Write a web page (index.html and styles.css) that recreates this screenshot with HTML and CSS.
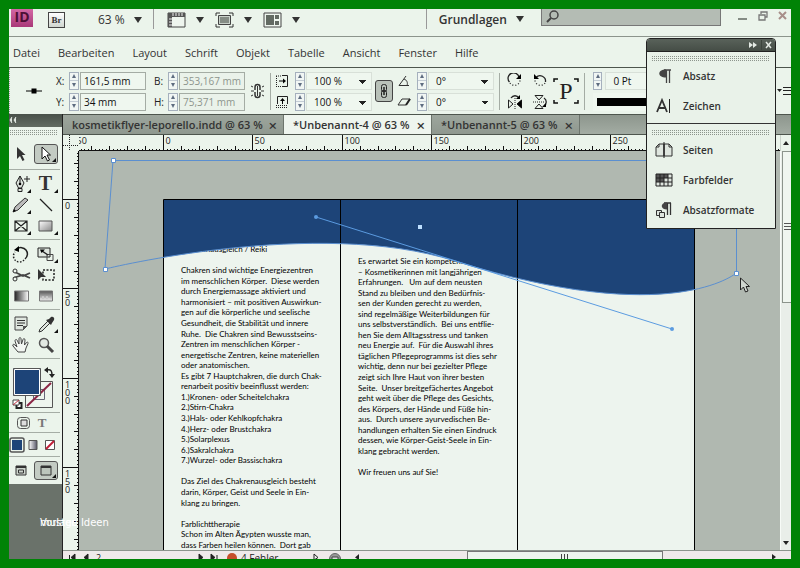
FILE: index.html
```html
<!DOCTYPE html>
<html lang="de">
<head>
<meta charset="utf-8">
<title>Unbenannt-4</title>
<link rel="stylesheet" href="styles.css">
</head>
<body>
<div class="app">
  <header class="topbar">
    <span class="logo">ID</span>
    <button class="bridge">Br</button>
    <button class="drop zoom">63 %<i class="caret"></i></button>
    <div class="views">
      <button class="drop" aria-label="Anzeigeoptionen"><svg width="20" height="16" viewBox="0 0 20 16"><path d="M1 1h17v14H1z" fill="#eef5ee" stroke="#444"/><path d="M1 1h17v4H5v10H1z" fill="#555"/><path d="M6 1v3M9 1v3M12 1v3M15 1v3M2 7h3M2 10h3M2 13h3" stroke="#eee"/></svg><i class="caret"></i></button>
      <button class="drop" aria-label="Bildschirmmodus"><svg width="20" height="16" viewBox="0 0 20 16"><path d="M1 4V1h4M14 1h4v3M18 12v3h-4M5 15H1v-3" fill="none" stroke="#333"/><path d="M3.500 3.500h12v9h-12z" fill="#c9d1c9" stroke="#444"/><path d="M5 5h9v6H5z" fill="#858d85"/></svg><i class="caret"></i></button>
      <button class="drop" aria-label="Dokumente anordnen"><svg width="20" height="16" viewBox="0 0 20 16"><path d="M1 1h17v14H1z" fill="#eef5ee" stroke="#444"/><path d="M3 3h8v10H3zM12 3h4v4h-4zM12 9h4v4h-4z" fill="#626a62"/></svg><i class="caret"></i></button>
    </div>
    <button class="drop workspace">Grundlagen<i class="caret"></i></button>
    <label class="search"><svg width="14" height="14" viewBox="0 0 14 14"><circle cx="8" cy="5" r="4" fill="none" stroke="#444" stroke-width="1.500"/><path d="M5 8L1 12" stroke="#444" stroke-width="2"/></svg><input type="search" aria-label="Suchen"></label>
    <div class="win">
      <button aria-label="Minimieren"><svg width="10" height="12" viewBox="0 0 10 12"><path d="M0 9h9" stroke="#858c85" stroke-width="2"/></svg></button>
      <button aria-label="Wiederherstellen"><svg width="10" height="12" viewBox="0 0 10 12"><path d="M3 4V2h6v5H7M1 5h6v5H1z" fill="none" stroke="#777" stroke-width="1.300"/></svg></button>
      <button aria-label="Schließen"><svg width="10" height="12" viewBox="0 0 10 12"><path d="M1 2l7 7M8 2L1 9" stroke="#a88f8a" stroke-width="2"/></svg></button>
    </div>
  </header>

  <nav class="menubar">
    <button>Datei</button><button>Bearbeiten</button><button>Layout</button><button>Schrift</button><button>Objekt</button><button>Tabelle</button><button>Ansicht</button><button>Fenster</button><button>Hilfe</button>
  </nav>

  <section class="controls">
    <svg class="anchor" width="16" height="10" viewBox="0 0 16 10"><path d="M0 5h16" stroke="#000"/><path d="M5.500 2.500h5v5h-5z"/></svg>
    <div class="fields pos">
      <label for="fx">X:</label><span class="spin"><button aria-label="X mehr"></button><button aria-label="X weniger"></button></span><input id="fx" value="161,5 mm">
      <label for="fy">Y:</label><span class="spin"><button aria-label="Y mehr"></button><button aria-label="Y weniger"></button></span><input id="fy" value="34 mm">
    </div>
    <div class="fields size">
      <label for="fb">B:</label><span class="spin"><button aria-label="B mehr"></button><button aria-label="B weniger"></button></span><input id="fb" value="353,167 mm" disabled>
      <label for="fh">H:</label><span class="spin"><button aria-label="H mehr"></button><button aria-label="H weniger"></button></span><input id="fh" value="75,371 mm" disabled>
    </div>
    <svg class="chain" width="13" height="18" viewBox="0 0 13 18"><path d="M4 8V5a2.500 2.500 0 015 0v3M4 10v3a2.500 2.500 0 005 0v-3" fill="none" stroke="#333" stroke-width="1.500"/><path d="M6.500 4v10" stroke="#333"/><path d="M0 4l2 1M0 9h3M0 14l2-1M13 4l-2 1M10 9h3M13 14l-2-1" stroke="#333"/></svg>
    <i class="rule"></i>
    <div class="fields pick">
      <label for="sx"><svg width="14" height="14" viewBox="0 0 14 14"><path d="M7 1.500h5.500v11H7" fill="none" stroke="#222"/><path d="M1.500 2v11M1 2h6M1 12.500h6" fill="none" stroke="#222" stroke-dasharray="1 1"/><path d="M4 7h5" stroke="#000"/><path d="M8 4.500v5l3-2.500z"/></svg></label><span class="spin"><button aria-label="X-Skalierung mehr"></button><button aria-label="X-Skalierung weniger"></button></span><select id="sx"><option>100 %</option></select>
      <label for="sy"><svg width="14" height="14" viewBox="0 0 14 14"><path d="M2.500 9V1.500h10V9" fill="none" stroke="#222"/><path d="M1 10.500h12M1 12.500h12" fill="none" stroke="#222" stroke-dasharray="1 1"/><path d="M7.500 9V5" stroke="#000"/><path d="M5 6h5L7.500 3z"/></svg></label><span class="spin"><button aria-label="Y-Skalierung mehr"></button><button aria-label="Y-Skalierung weniger"></button></span><select id="sy"><option>100 %</option></select>
    </div>
    <button class="link" aria-label="Proportionen beibehalten"><svg width="10" height="16" viewBox="0 0 10 16"><rect x="2.500" y="1.500" width="5" height="7" rx="2" fill="none" stroke="#222"/><rect x="2.500" y="7.500" width="5" height="7" rx="2" fill="none" stroke="#222"/><path d="M5 4v8" stroke="#222" stroke-width="1.500"/></svg></button>
    <div class="fields pick turn">
      <label for="sr"><svg width="14" height="14" viewBox="0 0 14 14"><path d="M9 2L2 11.500h10M7 5c3 1 4 4 3 6.500" fill="none" stroke="#333"/></svg></label><span class="spin"><button aria-label="Drehwinkel mehr"></button><button aria-label="Drehwinkel weniger"></button></span><select id="sr"><option>0°</option></select>
      <label for="ss"><svg width="14" height="14" viewBox="0 0 14 14"><path d="M5 4h8l-4 6H1z" fill="none" stroke="#333"/><path d="M13 4l-4 6" stroke="#222" stroke-width="2"/></svg></label><span class="spin"><button aria-label="Scherwinkel mehr"></button><button aria-label="Scherwinkel weniger"></button></span><select id="ss"><option>0°</option></select>
    </div>
    <i class="rule"></i>
    <div class="quad">
      <button aria-label="Im Uhrzeigersinn drehen"><svg width="16" height="16" viewBox="0 0 16 16"><path d="M12 4.500A5.500 5.500 0 102.500 9" fill="none" stroke="#222" stroke-width="1.300"/><path d="M3 10a5.500 5.500 0 0010-3" fill="none" stroke="#222" stroke-width="1.300" stroke-dasharray="1 2"/><path d="M14 1v5H9z"/></svg></button>
      <button aria-label="Gegen den Uhrzeigersinn drehen"><svg width="16" height="16" viewBox="0 0 16 16"><path d="M4 4.500A5.500 5.500 0 0113.500 9" fill="none" stroke="#222" stroke-width="1.300"/><path d="M13 10a5.500 5.500 0 01-10-3" fill="none" stroke="#222" stroke-width="1.300" stroke-dasharray="1 2"/><path d="M2 1v5h5z"/></svg></button>
      <button aria-label="Horizontal spiegeln"><svg width="16" height="16" viewBox="0 0 16 16"><path d="M1.500 6v8L6 10zM14.500 6v8L10 10z" fill="none" stroke="#222"/><path d="M14.500 6v8L10 10z"/><path d="M8 4v12" stroke="#222" stroke-dasharray="1 1"/><path d="M4 4c2-3 6-3 8 0" fill="none" stroke="#222" stroke-width="1.300"/><path d="M13 1v4H9z"/></svg></button>
      <button aria-label="Vertikal spiegeln"><svg width="16" height="16" viewBox="0 0 16 16"><path d="M3 1.500h8L7 6zM3 14.500h8L7 10z" fill="none" stroke="#222"/><path d="M1 8h12" stroke="#222" stroke-dasharray="1 1"/><path d="M12 4c3 2 3 6 0 8" fill="none" stroke="#222" stroke-width="1.300"/><path d="M10 13h4V9z"/></svg></button>
    </div>
    <div class="proxy"><svg width="26" height="26" viewBox="0 0 26 26"><path d="M1 4V1h4M21 1h4v3M25 22v3h-4M5 25H1v-3" fill="none" stroke="#111" stroke-width="1.500"/></svg><span>P</span></div>
    <i class="rule"></i>
    <div class="stroke">
      <div class="strokerow"><span class="spin"><button aria-label="Kontur mehr"></button><button aria-label="Kontur weniger"></button></span><input aria-label="Konturstärke" value="0 Pt"></div>
      <div class="strokebar"></div>
    </div>
    <button class="flyout" aria-label="Bedienfeldmenü"><svg width="14" height="10" viewBox="0 0 14 10"><path d="M0 3h5L2.500 6z" fill="#222"/><path d="M6 1.500h8M6 4.500h8M6 8.500h8" stroke="#222"/></svg></button>
  </section>

  <main class="main">
    <aside class="side">
      <div class="sidehead"><svg width="8" height="8" viewBox="0 0 8 8"><path d="M3 1L1 4l2 3M7 1L5 4l2 3" stroke="#dfe6df" fill="#dfe6df"/></svg></div>
      <div class="tools">
        <div class="group first">
          <i class="grip"></i>
          <button aria-label="Auswahl"><svg width="20" height="20" viewBox="0 0 20 20"><path d="M6 3v12l3-3 2.500 5 2-1-2.500-5h3.500z" fill="#333"/></svg></button>
          <button class="on" aria-label="Direktauswahl"><svg width="20" height="20" viewBox="0 0 20 20"><path d="M6 3v12l3-3 2.500 5 2-1-2.500-5h3.500z" fill="#fff" stroke="#111"/></svg></button>
        </div>
        <div class="group">
          <button class="more" aria-label="Zeichenstift"><svg width="20" height="20" viewBox="0 0 20 20"><path d="M9 2v8M9 2L5 9l2.500 5h3L13 9zM7 14.500h4v3H7z" fill="#dfe6df" stroke="#222"/><circle cx="9" cy="10" r="1.300"/><path d="M13 5h6M16 2v6" stroke="#222"/></svg></button>
          <button class="more letter" aria-label="Text">T</button>
          <button class="more" aria-label="Buntstift"><svg width="20" height="20" viewBox="0 0 20 20"><path d="M14 3l3 2L7 15l-5 2 2-5z" fill="#bbb" stroke="#333"/><path d="M2 17l1-3 2 2z"/></svg></button>
          <button aria-label="Linie"><svg width="20" height="20" viewBox="0 0 20 20"><path d="M4 4l12 12" stroke="#222" stroke-width="1.300"/></svg></button>
          <button class="more" aria-label="Rechteckrahmen"><svg width="20" height="20" viewBox="0 0 20 20"><path d="M4 5h12v10H4zM4 5l12 10M16 5L4 15" fill="none" stroke="#222" stroke-width="1.200"/></svg></button>
          <button class="more" aria-label="Rechteck"><svg width="20" height="20" viewBox="0 0 20 20"><path d="M3 5h13v10H3z" fill="url(#grey)" stroke="#555"/></svg></button>
        </div>
        <div class="group">
          <button aria-label="Drehen"><svg width="20" height="20" viewBox="0 0 20 20"><path d="M6 5a6 6 0 018 10" fill="none" stroke="#222" stroke-width="1.500"/><path d="M13 16a6 6 0 01-9-8" fill="none" stroke="#222" stroke-width="1.500" stroke-dasharray="1.500 1.500"/><path d="M8 2v6L3 6z"/></svg></button>
          <button class="more" aria-label="Skalieren"><svg width="20" height="20" viewBox="0 0 20 20"><path d="M2 4h12v9H2z" fill="#dfe6df" stroke="#222"/><path d="M11 10.500h6v6h-6z" fill="none" stroke="#444"/><path d="M12 11L6 7" stroke="#222" stroke-width="1.500"/><path d="M4 5.500h5L5.500 9z"/></svg></button>
          <button aria-label="Schere"><svg width="20" height="20" viewBox="0 0 20 20"><path d="M2 6l10 5 7-3M2 13l10-3 7 3" fill="none" stroke="#444" stroke-width="1.800"/><circle cx="4" cy="6" r="2" fill="#eef5ee" stroke="#333"/><circle cx="4" cy="14" r="2" fill="#eef5ee" stroke="#333"/></svg></button>
          <button aria-label="Frei transformieren"><svg width="20" height="20" viewBox="0 0 20 20"><path d="M7 5h11v10H7z" fill="none" stroke="#222" stroke-width="1.500" stroke-dasharray="2 1.500"/><path d="M2 4v11l3-3h5z" fill="#333"/></svg></button>
          <button aria-label="Verlaufsfarbfeld"><svg width="20" height="20" viewBox="0 0 20 20"><path d="M3.500 5h14v10h-14z" fill="url(#dark)" stroke="#777"/></svg></button>
          <button aria-label="Weiche Verlaufskante"><svg width="20" height="20" viewBox="0 0 20 20"><path d="M3.500 5h13v10h-13z" fill="url(#fade)" stroke="#777"/><path d="M4 13h12M6 11h8" stroke="#ddd" stroke-dasharray="2 2"/></svg></button>
        </div>
        <div class="group">
          <button aria-label="Notiz"><svg width="20" height="20" viewBox="0 0 20 20"><path d="M4 3h12v9l-4 4H4z" fill="#dfe6df" stroke="#444"/><path d="M6 6.500h8M6 9h8M6 11.500h6" stroke="#333"/><path d="M16 12h-4v4z" fill="#555"/></svg></button>
          <button class="more" aria-label="Pipette"><svg width="20" height="20" viewBox="0 0 20 20"><path d="M12 7L4 15l-1 3 3-1 8-8z" fill="#dfe6df" stroke="#333"/><path d="M10 6l5 5 1-2 2-3c1-2-1-4-3-3l-2 2z" fill="#333"/></svg></button>
          <button aria-label="Hand"><svg width="20" height="20" viewBox="0 0 20 20"><path d="M7 17l-5-6c-1-2 1-2 2-1l2 2-2-6c0-2 2-2 2.500 0L8 9V4c0-2 2-2 2 0l.500 5 1.500-4.500c.500-1.500 2-1 2 .500L13.500 10l2-2.500c1-1 2 0 1.500 1L15 13l-1 4z" fill="#f2f6f2" stroke="#444"/></svg></button>
          <button aria-label="Zoom"><svg width="20" height="20" viewBox="0 0 20 20"><circle cx="8" cy="8" r="4.500" fill="#e3e9e3" stroke="#555" stroke-width="1.500"/><path d="M11 11l6 6" stroke="#444" stroke-width="3"/></svg></button>
        </div>
        <div class="group colors">
          <svg width="50" height="48" viewBox="0 0 50 48"><path d="M16.500 20.500h27v26h-27z" fill="#eef5ee" stroke="#555"/><path d="M24.500 28.500h11v10h-11z" fill="#eef5ee" stroke="#667"/><path d="M18 45L42 22" stroke="#8b2545" stroke-width="2"/><path d="M4.500 7.500h27v27h-27z" fill="#1d4478" stroke="#555"/><path d="M5.500 8.500h25v25h-25z" fill="none" stroke="#fff"/><path d="M38 9c4-1 5 1 5 5" fill="none" stroke="#222" stroke-width="1.500"/><path d="M35 9l4-3v6zM40 13h6l-3 4z" fill="#222"/><path d="M7.500 42h5v5h-5z" fill="#fff" stroke="#222" stroke-width="2"/><path d="M4 39h6v5H4z" fill="#fff" stroke="#444"/><path d="M4 44l6-5" stroke="#c03040"/></svg>
        </div>
        <div class="group fmt">
          <button aria-label="Format wirkt sich auf Container aus"><svg width="16" height="14" viewBox="0 0 16 14"><rect x="1.500" y="1.500" width="12" height="11" rx="3" fill="none" stroke="#555"/><path d="M5 4h6v6H5z" fill="#ddd" stroke="#333"/></svg></button>
          <button class="letter small" aria-label="Format wirkt sich auf Text aus">T</button>
        </div>
        <div class="group apply">
          <button aria-label="Farbe anwenden"><svg width="16" height="16" viewBox="0 0 16 16"><rect x="1" y="1" width="14" height="14" rx="2" fill="none" stroke="#555" stroke-width="1.500"/><path d="M3 3h10v10H3z" fill="#1d4478"/></svg></button>
          <button aria-label="Verlauf anwenden"><svg width="16" height="16" viewBox="0 0 16 16"><path d="M4 3.500h8v9H4z" fill="url(#dark2)" stroke="#555"/></svg></button>
          <button aria-label="Keine anwenden"><svg width="16" height="16" viewBox="0 0 16 16"><path d="M3.500 3.500h9v9h-9z" fill="#fff" stroke="#555"/><path d="M4 12l8-8" stroke="#c0203a" stroke-width="2"/></svg></button>
        </div>
        <div class="group modes">
          <button aria-label="Normal"><svg width="16" height="16" viewBox="0 0 16 16"><path d="M3 3h10v9H3z" fill="#cdd5cd" stroke="#333"/><path d="M3 4h10" stroke="#333" stroke-width="2"/><path d="M5.500 7h5v3h-5z" fill="none" stroke="#333"/></svg></button>
          <button class="on" aria-label="Vorschau"><svg width="16" height="16" viewBox="0 0 16 16"><path d="M3 3h10v9H3z" fill="#bcc5bc" stroke="#333"/><path d="M3 4h10" stroke="#333" stroke-width="2"/></svg></button>
        </div>
      </div>
    </aside>

    <section class="doc">
      <div class="tabs">
        <div class="tab wide"><span>kosmetikflyer-leporello.indd @ 63 %</span><button aria-label="Tab schließen">×</button></div>
        <div class="tab current"><span>*Unbenannt-4 @ 63 %</span><button aria-label="Tab schließen">×</button></div>
        <div class="tab"><span>*Unbenannt-5 @ 63 %</span><button aria-label="Tab schließen">×</button></div>
      </div>
      <svg class="origin" width="16" height="16" viewBox="0 0 16 16"><path d="M0 10.500h16M6.500 0v16" stroke="#222" stroke-dasharray="1 1"/></svg>
      <svg class="hruler" id="hruler" height="16"></svg>
      <button class="up" aria-label="Nach oben"><i></i></button>
      <svg class="vruler" id="vruler" width="16"></svg>

      <div class="canvas">
        <div class="page"></div>
        <div class="frame one">
          <p>Chakrenausgleich / Reiki</p><p></p>
          <p>Chakren sind wichtige Energiezentren</p><p>im menschlichen Körper.&nbsp; Diese werden</p><p>durch Energiemassage aktiviert und</p><p>harmonisiert – mit positiven Auswirkun-</p><p>gen auf die körperliche und seelische</p><p>Gesundheit, die Stabilität und innere</p><p>Ruhe.&nbsp; Die Chakren sind Bewusstseins-</p><p>Zentren im menschlichen Körper -</p><p>energetische Zentren, keine materiellen</p><p>oder anatomischen.</p>
          <p>Es gibt 7 Hauptchakren, die durch Chak-</p><p>renarbeit positiv beeinflusst werden:</p><p>1.)Kronen- oder Scheitelchakra</p><p>2.)Stirn-Chakra</p><p>3.)Hals- oder Kehlkopfchakra</p><p>4.)Herz- oder Brustchakra</p><p>5.)Solarplexus</p><p>6.)Sakralchakra</p><p>7.)Wurzel- oder Bassischakra</p><p></p>
          <p>Das Ziel des Chakrenausgleich besteht</p><p>darin, Körper, Geist und Seele in Ein-</p><p>klang zu bringen.</p><p></p>
          <p>Farblichttherapie</p><p>Schon im Alten Ägypten wusste man,</p><p>dass Farben heilen können.&nbsp; Dort gab</p>
        </div>
        <div class="frame two">
          <p>Es erwartet Sie ein kompetentes</p><p>– Kosmetikerinnen mit langjährigen</p><p>Erfahrungen.&nbsp;&nbsp; Um auf dem neusten</p><p>Stand zu bleiben und den Bedürfnis-</p><p>sen der Kunden gerecht zu werden,</p><p>sind regelmäßige Weiterbildungen für</p><p>uns selbstverständlich.&nbsp; Bei uns entflie-</p><p>hen Sie dem Alltagsstress und tanken</p><p>neu Energie auf.&nbsp; Für die Auswahl ihres</p><p>täglichen Pflegeprogramms ist dies sehr</p><p>wichtig, denn nur bei gezielter Pflege</p><p>zeigt sich Ihre Haut von ihrer besten</p><p>Seite.&nbsp; Unser breitgefächertes Angebot</p><p>geht weit über die Pflege des Gesichts,</p><p>des Körpers, der Hände und Füße hin-</p><p>aus.&nbsp; Durch unsere ayurvedischen Be-</p><p>handlungen erhalten Sie einen Eindruck</p><p>dessen, wie Körper-Geist-Seele in Ein-</p><p>klang gebracht werden.</p><p></p><p>Wir freuen uns auf Sie!</p>
        </div>
        <svg class="art" width="701" height="420" viewBox="79 151 701 420">
          <defs>
            <clipPath id="sheet"><path d="M164 199h530v372H164z"/></clipPath>
            <linearGradient id="grey" x2="1" y2="1"><stop stop-color="#fff"/><stop offset="1" stop-color="#888"/></linearGradient>
            <linearGradient id="dark"><stop stop-color="#222"/><stop offset="1" stop-color="#fff"/></linearGradient>
            <linearGradient id="dark2"><stop stop-color="#fff"/><stop offset="1" stop-color="#556"/></linearGradient>
            <linearGradient id="fade" x2="0" y2="1"><stop stop-color="#555"/><stop offset="1" stop-color="#eee"/></linearGradient>
          </defs>
          <path clip-path="url(#sheet)" fill="#1d4478" d="M113 160L105 269C105 269 316 217 455 261C672 329 736 273 736 273V160z"/>
          <path d="M163.500 571V199.500H694.500V571M340.500 199v372M517.500 199v372" fill="none" stroke="#000"/>
          <path d="M113 160.500L105 269C105 269 316 217 455 261C672 329 736 273 736.500 273V160.500z" fill="none" stroke="#5b8fd0"/>
          <path d="M316 217L672 329" stroke="#5b9be0"/>
          <g fill="#5b9be0"><circle cx="316" cy="217" r="2"/><circle cx="672" cy="329" r="2"/></g>
          <path d="M418 225h4v4h-4z" fill="#bfe0ff"/>
          <g fill="#fff" stroke="#5b8fd0"><path d="M111.500 158.500h4v4h-4zM103.500 267.500h4v4h-4zM734.500 271.500h4v4h-4z"/></g>
          <path d="M740.500 278v12l3-3 2 5 2.500-1-2-4.500h3.500z" fill="#cfd6cf" stroke="#222"/>
        </svg>
      </div>
      <div class="vscroll"><div class="vthumb"><i></i></div><button class="down" aria-label="Nach unten"><i></i></button></div>

      <footer class="status">
        <svg class="pg" width="24" height="9" viewBox="0 0 24 9"><path d="M3.500 4v5M9 3v6L5 6.500zM22 3v6l-4-2.500z" fill="#222" stroke="#222"/></svg>
        <span class="num">2</span>
        <svg class="pg" width="22" height="9" viewBox="0 0 22 9"><path d="M2 3v6l4-2.500zM14 3v6l4-2.500zM20 4v5" fill="#222" stroke="#222"/></svg>
        <i class="dot"></i><span class="err">4 Fehler</span>
        <svg class="pg" width="48" height="9" viewBox="0 0 48 9"><path d="M2 3v6l4-2.500z" fill="#eee" stroke="#222"/><circle cx="23" cy="8" r="5.500" fill="#999" stroke="#666"/><path d="M20 6h6v4h-6z" fill="#ddd" stroke="#444"/><path d="M47 3v6l-4-2.500z" fill="#222"/></svg>
        <div class="htrack"><div class="hthumb"><i></i></div></div>
        <svg class="pg" width="20" height="9" viewBox="0 0 20 9"><path d="M1 3v6l4-3z" fill="#222"/></svg>
      </footer>
    </section>
  </main>

  <aside class="panel">
    <div class="panelhead"><svg width="24" height="10" viewBox="0 0 24 10"><path d="M0 2l4 3-4 3zM4 2l4 3-4 3z" fill="#e4eae4"/><path d="M12.500 0v10" stroke="#3c443c"/><path d="M17 2l5 6M22 2l-5 6" stroke="#e4eae4" stroke-width="1.500"/></svg></div>
    <div class="set">
      <i class="grip"></i>
      <button><svg width="20" height="20" viewBox="0 0 20 20"><path d="M10 4h7M12.500 4v13M15.500 4v13" stroke="#444" stroke-width="1.300" fill="none"/><path d="M12 3.500v8c-9 0-9-8 0-8z" fill="#444"/></svg>Absatz</button>
      <button><svg width="20" height="20" viewBox="0 0 20 20"><path d="M3 16L8 4l5 12M5 12h6" fill="none" stroke="#333" stroke-width="1.800"/><path d="M15.500 3v14" stroke="#222"/></svg>Zeichen</button>
    </div>
    <div class="set">
      <i class="grip"></i>
      <button><svg width="20" height="20" viewBox="0 0 20 20"><path d="M2 7l3-3h5v12H2zM10 4h5l3 3v9h-8z" fill="#dfe6df" stroke="#333"/><path d="M10 2v16" stroke="#222"/><path d="M5 4v3H2M15 4v3h3" fill="none" stroke="#333"/></svg>Seiten</button>
      <button><svg width="20" height="20" viewBox="0 0 20 20"><path d="M2 4h16v12H2z" fill="#dfe6df"/><path d="M2 4h12v4H2zM2 8h4v4H2zM6 8h4v4H6z" fill="#555"/><path d="M2 4h16v12H2zM2 8h16M2 12h16M6 4v12M10 4v12M14 4v12" fill="none" stroke="#222"/></svg>Farbfelder</button>
      <button><svg width="20" height="20" viewBox="0 0 20 20"><path d="M10 3h7M13.500 3v12M16.500 3v12" stroke="#333" stroke-width="1.300"/><path d="M13 2.500v7c-7 0-7-7 0-7z" fill="#444"/><path d="M2.500 10.500h5v5h-5z" fill="#dfe6df" stroke="#333"/><path d="M5.500 12.500h5v5h-5z" fill="#dfe6df" stroke="#333"/></svg>Absatzformate</button>
    </div>
  </aside>

  <div class="mark"><span>Vorlage Ideen</span><span>muster</span></div>
</div>
<script src="rulers.js"></script>
</body>
</html>
```
FILE: rulers.js
```js
// Millimetre rulers at 63 % zoom: one tick every 2 mm, longer every 10 and 50 mm.
const MM = 1.788;

function ruler(el, zero, vertical) {
  const box = el.getBoundingClientRect();
  const size = vertical ? box.height : box.width;
  let d = '';
  let labels = '';
  for (let mm = -50; mm <= 1000; mm += 2) {
    const p = Math.round(zero + mm * MM) + 0.5;
    if (p < -6) continue;
    if (p > size) break;
    const len = mm % 50 === 0 ? 16 : mm % 10 === 0 ? 5 : 2;
    d += vertical ? `M${16 - len} ${p}h${len}` : `M${p} ${16 - len}v${len}`;
    if (mm % 50 === 0) {
      const text = String(Math.abs(mm));
      if (vertical) {
        [...text].forEach((c, i) => { labels += `<text x="2" y="${p + 9 + i * 8}">${c}</text>`; });
      } else {
        labels += `<text x="${p + 2}" y="9">${text}</text>`;
      }
    }
  }
  d += vertical ? 'M15.5 0V2000' : 'M0 15.5H4000';
  el.innerHTML = `<path d="${d}" stroke="#111" fill="none"/>${labels}`;
}

ruler(document.getElementById('hruler'), 84, false);
ruler(document.getElementById('vruler'), 48, true);
```
FILE: styles.css
```css
* { box-sizing: border-box; }
body { margin: 0; font-family: "Open Sans", "Noto Sans", sans-serif; font-size: 11px; color: #333; }
button { border: 0; padding: 0; margin: 0; background: none; font: inherit; color: inherit; display: flex; align-items: center; justify-content: center; }
svg { display: block; flex: none; }
p { margin: 0; }

.app { position: relative; display: flex; flex-direction: column; height: 100vh; border: 9px solid #008306; background: #ebf4eb; overflow: hidden; }

.caret { width: 0; height: 0; border: 4px solid transparent; border-top: 6px solid #333; border-bottom: 0; }

.topbar { display: flex; align-items: flex-start; flex: none; height: 28px; padding-left: 2px; border-bottom: 1px solid #8c948c; }
.topbar > * { flex: none; }
.logo { width: 22px; height: 18px; background: linear-gradient(#d368a4, #a93878); color: #4c1035; font-size: 14px; font-weight: 700; line-height: 16px; text-align: center; }
.bridge { width: 17px; height: 16px; margin: 3px 0 0 15px; border: 1px solid #444; background: linear-gradient(#fff, #cfd6cf); font: 700 9px "Liberation Serif", serif; }
.drop { gap: 9px; height: 21px; white-space: nowrap; }
.zoom { margin-left: 33px; font-size: 12px; }
.views { display: flex; gap: 11px; height: 20px; margin-left: 11px; padding-left: 13px; border-left: 1px solid #999; }
.workspace { margin-left: 126px; height: 20px; padding: 0 17px 0 12px; border-left: 1px solid #999; font-size: 12px; font-weight: 600; }
.topbar .search { display: flex; flex: 1; min-width: 0; height: 17px; padding: 1px 4px; background: #b4bcb4; border: 1px solid #777; border-top: 0; }
.search input { flex: 1; min-width: 0; border: 0; background: none; outline: 0; }
.win { display: flex; gap: 10px; padding: 1px 3px 0 17px; }

.menubar { display: flex; align-items: center; flex: none; gap: 18px; height: 31px; padding: 0 4px; border-bottom: 1px solid #4d554d; }

.controls { display: flex; align-items: center; flex: none; height: 46px; padding-left: 16px; border-left: 1px dotted #999; font-size: 10px; color: #222; overflow: hidden; }
.fields { display: grid; grid-template-columns: 13px 10px 66px; gap: 3px 1px; align-items: center; }
.fields input, .fields select, .stroke input { width: 100%; height: 18px; padding: 0 3px; border: 1px solid #a4aca4; border-radius: 0; background: #eff7ef; font: inherit; color: #111; }
.fields input:disabled { color: #8d958d; background: #eaf2ea; }
.pos { grid-template-columns: 12px 10px 66px; margin-left: 14px; }
.size { margin-left: 8px; }
.spin { display: grid; height: 18px; width: 10px; border: 1px solid #a5b0bd; background: #f1f6f4; }
.spin button { border-top: 1px solid #c3ccd4; }
.spin button:first-child { border-top: 0; }
.spin button::before { content: ""; border: 2px solid transparent; border-bottom: 4px solid #5e6c80; border-top: 0; }
.spin button:last-child::before { border-top: 4px solid #5e6c80; border-bottom: 0; }
.chain { margin: 0 6px; }
.rule { width: 1px; height: 37px; background: #a4aca4; }
.pick { grid-template-columns: 19px 10px 66px; margin-left: 4px; }
.pick select { appearance: none; padding-left: 7px; border-color: #d8e0d8; background: linear-gradient(to bottom left, #222 50%, transparent 50%) right 8px top 7px / 4px 4px no-repeat, linear-gradient(to bottom right, #222 50%, transparent 50%) right 4px top 7px / 4px 4px no-repeat, #eff7ef; }
.link { width: 18px; height: 22px; margin-left: 3px; border: 1px solid #444; border-radius: 3px; background: #b9c1b9; }
.turn { margin-right: 5px; }
.quad { display: grid; grid-template-columns: 16px 16px; gap: 5px 9px; margin-left: 7px; }
.proxy { display: grid; place-items: center; margin: 0 5px; }
.proxy > * { grid-area: 1 / 1; }
.proxy span { font: 24px/26px "Liberation Serif", serif; color: #222; }
.stroke { flex: 1; padding-left: 8px; display: grid; gap: 3px; }
.strokerow { display: flex; gap: 3px; }
.stroke input { border-color: #d8e0d8; padding-left: 7px; }
.strokebar { height: 18px; border: solid #eff7ef; border-width: 5px 4px; background: #000; }
.flyout { margin-left: 4px; }

.main { display: flex; flex: 1; min-height: 0; }
.side { flex: none; width: 53px; background: #6a726a; }
.sidehead { height: 13px; padding: 2px 0; background: linear-gradient(#49514a, #626b62); }
.tools { background: #ebf4eb; }
.group { display: grid; grid-template-columns: 23px 27px; grid-auto-rows: 21px; padding: 3px 0; margin-right: 2px; border-bottom: 1px solid #a5ada5; }
.group button { position: relative; }
.grip { height: 5px; margin: 0 1px; background: conic-gradient(transparent 75%, #8d958d 0) 0 0 / 2px 2px; }
.first { padding: 3px 0 4px; gap: 6px 0; grid-template-rows: 7px 22px; }
.first .grip { grid-column: 1 / -1; }
.on { border: 1px solid #555; border-radius: 3px; background: #c3cbc3; margin: 1px 1px 1px 2px; }
.more::after, .on::after { content: ""; position: absolute; right: 1px; bottom: 1px; border: 2px solid transparent; border-right-color: #111; border-bottom-color: #111; }
.letter { font: 700 20px "Liberation Serif", serif; }
.small { font-size: 13px; color: #777; }
.colors { display: block; padding: 2px 0 3px; }
.fmt { padding: 0; grid-auto-rows: 19px; grid-template-columns: 29px 8px; }
.apply { padding: 1px 0; grid-template-columns: 16px 16px 18px; }
.modes { border: 0; }

.doc { flex: 1; min-width: 0; display: grid; grid-template-columns: 16px minmax(0, 1fr) 11px; grid-template-rows: 21px 16px minmax(0, 1fr) 9px; border-left: 1px solid #222; }
.tabs { grid-column: 1 / -1; display: flex; background: linear-gradient(#8d968d, #a3aca3); border-top: 1px solid #4d554d; border-bottom: 1px solid #4d554d; }
.tab { display: flex; align-items: center; justify-content: space-between; width: 148px; padding: 0 6px 0 9px; border-right: 1px solid #6d756d; font-weight: 600; font-size: 11px; white-space: nowrap; background: linear-gradient(#9da69d, #8f988f); }
.tab button { font-size: 15px; line-height: 16px; }
.wide { width: 221px; }
.current { background: #eef5ee; }
.hruler, .vruler { font-size: 9px; fill: #222; overflow: hidden; }
.hruler { width: 100%; }
.vruler { height: 100%; }
.up { border-left: 1px solid #ccd4cc; }
.up i { border: 3px solid transparent; border-bottom: 4px solid #222; border-top: 0; }
.down { width: 100%; height: 14px; }
.down i { border: 3px solid transparent; border-top: 4px solid #222; border-bottom: 0; }
.canvas { position: relative; overflow: hidden; background: #b0b8b0; }
.page { position: absolute; left: 85px; top: 48px; width: 531px; height: 100%; background: #edf4ee; }
.art { position: absolute; left: 0; top: 0; }
.frame { position: absolute; display: flex; flex-direction: column; justify-content: space-between; font: 8px/10px Lato, "Open Sans", sans-serif; color: #000; white-space: nowrap; }
.frame p { height: 10px; }
.one { left: 102px; top: 93px; height: 306px; }
.two { left: 279px; top: 105px; height: 221px; }
.vscroll { display: flex; flex-direction: column; justify-content: space-between; background: #e9eee9; border-left: 1px solid #f7fbf7; }
.vthumb { height: 152px; margin-left: 1px; display: grid; place-items: center; border: 1px solid #8c948c; border-right: 0; background: #f0f6f0; }
.vthumb i { width: 7px; height: 8px; background: repeating-linear-gradient(#555 0 1px, transparent 1px 3px); }
.status { grid-column: 1 / -1; display: flex; overflow: hidden; background: #efeaea; border-top: 1px solid #8c948c; font-size: 9px; line-height: 12px; color: #222; }
.num { width: 104px; padding: 1px 6px; }
.pg { margin-left: 3px; }
.dot { flex: none; width: 10px; height: 10px; margin: 2px 4px 0 8px; border-radius: 5px; background: #c5502c; }
.err { width: 68px; padding-top: 1px; font-size: 10px; }
.htrack { flex: 1; }
.hthumb { display: grid; place-items: center; width: 196px; height: 12px; margin: 0 0 0 107px; border: 1px solid #777; background: #eef5ee; }
.hthumb i { width: 8px; height: 7px; background: repeating-linear-gradient(90deg, #444 0 1px, transparent 1px 3px); }

.panel { position: absolute; top: 29px; right: 15px; width: 130px; border: 1px solid #222; border-radius: 4px 4px 0 0; background: #e9f2e9; font-size: 10px; font-weight: 600; overflow: hidden; }
.panelhead { display: flex; justify-content: flex-end; padding: 1px 2px 1px 0; background: linear-gradient(#59625a, #454d46); border-bottom: 1px solid #222; }
.set { padding: 4px 4px 2px; border-bottom: 1px solid #333; }
.set:last-child { border: 0; padding: 6px 4px 3px; }
.set .grip { display: block; }
.set button { width: 100%; height: 30px; gap: 9px; padding-left: 3px; justify-content: flex-start; }

.mark { position: absolute; left: 31px; top: 507px; display: grid; font: 10px/14px "DejaVu Sans", sans-serif; color: #fff; white-space: nowrap; }
.mark span { grid-area: 1 / 1; }
```
